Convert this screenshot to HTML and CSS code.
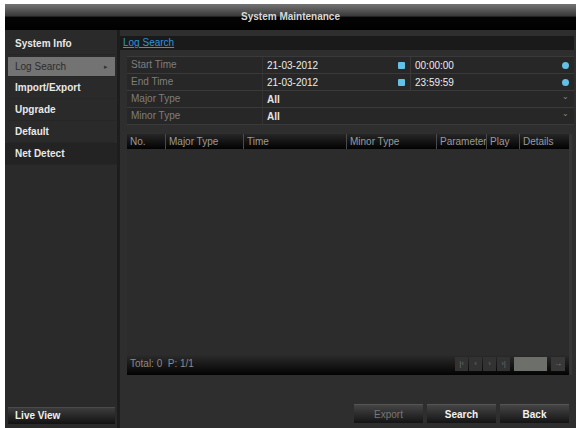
FILE: index.html
```html
<!DOCTYPE html>
<html lang="en">
<head>
  <meta charset="UTF-8" />
  <title>System Maintenance</title>
  <link rel="stylesheet" href="styles.css">
</head>
<body>
  <div class="screen">
    <div class="titlebar">System Maintenance</div>
    <div class="main-area">
      <div class="sidebar">
        <div class="menu-item">System Info</div>
        <div class="menu-item active">Log Search <span class="arrow">&#9656;</span></div>
        <div class="menu-item">Import/Export</div>
        <div class="menu-item">Upgrade</div>
        <div class="menu-item">Default</div>
        <div class="menu-item dim">Net Detect</div>
        <div class="live-view">Live View</div>
      </div>

      <div class="content">
        <div class="tab-bar">
          <span class="tab">Log Search</span>
        </div>

        <div class="form">
          <div class="form-row">
            <div class="label">Start Time</div>
            <div class="value split">
              <div class="part">21-03-2012 <span class="ico-square"></span></div>
              <div class="part">00:00:00 <span class="ico-clock"></span></div>
            </div>
          </div>
          <div class="form-row">
            <div class="label">End Time</div>
            <div class="value split">
              <div class="part">21-03-2012 <span class="ico-square"></span></div>
              <div class="part">23:59:59 <span class="ico-clock"></span></div>
            </div>
          </div>
          <div class="form-row">
            <div class="label">Major Type</div>
            <div class="value">All <span class="chev">&#8964;</span></div>
          </div>
          <div class="form-row">
            <div class="label">Minor Type</div>
            <div class="value">All <span class="chev">&#8964;</span></div>
          </div>
        </div>

        <div class="table">
          <div class="thead">
            <div class="th">No.</div>
            <div class="th">Major Type</div>
            <div class="th">Time</div>
            <div class="th">Minor Type</div>
            <div class="th">Parameter</div>
            <div class="th">Play</div>
            <div class="th">Details</div>
          </div>
          <div class="tbody"></div>
          <div class="tfoot">
            <span class="total">Total: 0  P: 1/1</span>
            <div class="pager">
              <span class="pg">|&lsaquo;</span>
              <span class="pg">&lsaquo;</span>
              <span class="pg">&rsaquo;</span>
              <span class="pg">&rsaquo;|</span>
              <span class="page-input"></span>
              <span class="go">&rarr;</span>
            </div>
          </div>
        </div>

        <div class="buttons">
          <div class="btn disabled">Export</div>
          <div class="btn">Search</div>
          <div class="btn">Back</div>
        </div>
      </div>
    </div>
  </div>
</body>
</html>
```

FILE: styles.css
```css
body {
  margin: 0;
  background: #fff;
  font-family: 'Liberation Sans', Arial, sans-serif;
  font-size: 10px;
  color: #e6e6e6;
}
.screen {
  margin: 4px 0 0 5px;
  width: 571px;
  height: 424px;
  display: flex;
  flex-direction: column;
  background: #2e2e2e;
}
.titlebar {
  height: 26px;
  box-sizing: border-box;
  padding-top: 7px;
  text-align: center;
  font-weight: bold;
  color: #d8d8d8;
  background: linear-gradient(#747474 0%, #3a3a3a 45%, #050505 52%, #000 100%);
}
.main-area {
  flex: 1;
  display: flex;
}
.sidebar {
  width: 115px;
  border-right: 3px solid #1d1d1d;
  background: #2a2a2a;
  display: flex;
  flex-direction: column;
  padding: 3px 0 4px;
  box-sizing: border-box;
}
.menu-item {
  height: 22px;
  line-height: 22px;
  margin: 0 2px 0 3px;
  padding-left: 7px;
  font-weight: bold;
  color: #e8e8e8;
  border-bottom: 1px solid #262626;
  box-sizing: border-box;
  position: relative;
}
.menu-item.active {
  background: #737373;
  color: #2c2c2c;
  font-weight: normal;
  border-top: 2px solid #2a2a2a;
  line-height: 19px;
}
.menu-item.dim {
  background: #232323;
  margin: 0;
  padding-left: 10px;
}
.arrow {
  position: absolute;
  right: 7px;
  font-size: 7px;
  color: #333;
}
.live-view {
  margin: auto 2px 0 3px;
  height: 16px;
  line-height: 16px;
  padding-left: 7px;
  font-weight: bold;
  color: #f0f0f0;
  background: linear-gradient(#3c3c3c, #121212);
  border-top: 1px solid #4a4a4a;
}
.content {
  flex: 1;
  display: flex;
  flex-direction: column;
  padding: 6px 2px 5px 0;
}
.tab-bar {
  height: 14px;
  background: #1a1a1a;
  padding-left: 3px;
}
.tab {
  color: #2f95d6;
  text-decoration: underline;
  line-height: 13px;
}
.form {
  margin: 6px 0 0 7px;
  border-top: 1px solid #3a3a3a;
}
.form-row {
  display: flex;
  height: 16px;
  border-bottom: 1px solid #3a3a3a;
  background: #272727;
}
.label {
  width: 131px;
  padding-left: 4px;
  line-height: 16px;
  color: #7e7e7e;
  border-right: 1px solid #333;
}
.value {
  flex: 1;
  display: flex;
  align-items: center;
  padding: 0 5px 0 4px;
  font-weight: bold;
  color: #e4e4e4;
  justify-content: space-between;
}
.value.split {
  padding: 0;
}
.part {
  flex: 1;
  display: flex;
  align-items: center;
  justify-content: space-between;
  padding: 0 5px 0 4px;
  height: 100%;
  font-weight: normal;
  color: #ececec;
}
.part + .part {
  border-left: 1px solid #3a3a3a;
  flex: 0 0 154px;
}
.ico-square {
  width: 7px;
  height: 7px;
  border-radius: 1px;
  background: #63c0e6;
}
.ico-clock {
  width: 7px;
  height: 7px;
  border-radius: 50%;
  background: #63c0e6;
}
.chev {
  font-weight: normal;
  color: #8a8a8a;
  font-size: 8px;
  line-height: 8px;
  margin-top: -4px;
}
.table {
  margin: 9px 2px 0 7px;
  height: 241px;
  display: flex;
  flex-direction: column;
  border-right: 3px solid #363636;
}
.thead {
  display: grid;
  grid-template-columns: 38px 77px 102px 89px 49px 32px 1fr;
  gap: 1px;
  height: 15px;
  background: #4a4a4a;
}
.th {
  background: linear-gradient(#262626, #020202);
  color: #9a9a9a;
  line-height: 15px;
  padding-left: 3px;
  white-space: nowrap;
  overflow: hidden;
}
.tbody {
  flex: 1;
  background: #2c2c2c;
}
.tfoot {
  height: 20px;
  display: flex;
  align-items: center;
  justify-content: space-between;
  background: linear-gradient(#2b2b2b, #030303);
  padding: 0 4px 0 3px;
}
.total {
  color: #8a8a8a;
  white-space: pre;
  margin-top: -4px;
}
.pager {
  display: flex;
  align-items: center;
  gap: 1px;
  margin-top: -2px;
}
.pg {
  width: 13px;
  height: 14px;
  line-height: 14px;
  text-align: center;
  font-size: 8px;
  color: #6a6a6a;
  background: #323232;
}
.page-input {
  width: 33px;
  height: 14px;
  margin-left: 3px;
  background: #6c6f6a;
}
.go {
  width: 14px;
  height: 14px;
  margin-left: 3px;
  line-height: 14px;
  text-align: center;
  font-size: 8px;
  color: #888;
  background: #383838;
}
.buttons {
  margin-top: auto;
  display: flex;
  justify-content: flex-end;
  gap: 4px;
  padding-right: 5px;
}
.btn {
  width: 69px;
  height: 19px;
  line-height: 19px;
  text-align: center;
  font-weight: bold;
  color: #f2f2f2;
  background: linear-gradient(#454545, #141414);
  border-top: 1px solid #555;
  box-sizing: border-box;
}
.btn.disabled {
  color: #777;
  font-weight: normal;
}
```
